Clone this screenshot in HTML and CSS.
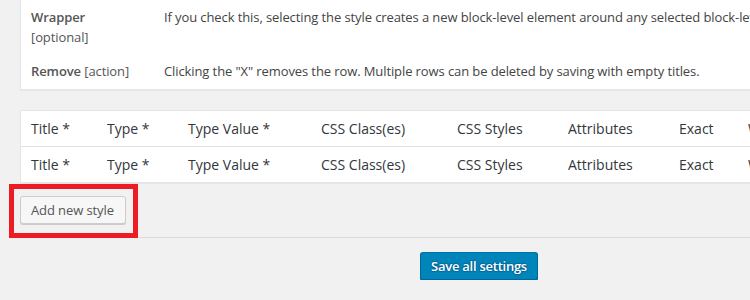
FILE: index.html
```html
<!DOCTYPE html>
<html>
  <head>
    <meta charset="UTF-8">
    <title>Style settings</title>
    <link rel="stylesheet" href="styles.css">
  </head>
  <body>
    <div class="wrap">
      <div class="card help">
        <table class="help-table">
          <tr>
            <td class="lbl"><b>Wrapper</b><br>[optional]</td>
            <td>If you check this, selecting the style creates a new block-level element around any selected block-level elements.</td>
          </tr>
          <tr>
            <td class="lbl"><b>Remove</b> [action]</td>
            <td>Clicking the "X" removes the row. Multiple rows can be deleted by saving with empty titles.</td>
          </tr>
        </table>
      </div>

      <div class="card styles">
        <table class="styles-table">
          <colgroup>
            <col class="c-title">
            <col class="c-type">
            <col class="c-value">
            <col class="c-class">
            <col class="c-css">
            <col class="c-attr">
            <col class="c-exact">
            <col class="c-wrap">
          </colgroup>
          <thead>
            <tr>
              <th>Title *</th>
              <th>Type *</th>
              <th>Type Value *</th>
              <th>CSS Class(es)</th>
              <th>CSS Styles</th>
              <th>Attributes</th>
              <th>Exact</th>
              <th>Wrapper</th>
            </tr>
          </thead>
          <tfoot>
            <tr>
              <td>Title *</td>
              <td>Type *</td>
              <td>Type Value *</td>
              <td>CSS Class(es)</td>
              <td>CSS Styles</td>
              <td>Attributes</td>
              <td>Exact</td>
              <td>Wrapper</td>
            </tr>
          </tfoot>
        </table>
      </div>

      <div class="mark">
        <button class="button">Add new style</button>
      </div>

      <div class="submit">
        <button class="button primary">Save all settings</button>
      </div>
    </div>
  </body>
</html>
```

FILE: styles.css
```css
html, body {
  margin: 0;
  padding: 0;
  overflow: hidden;
}
body {
  background: #f1f1f1;
  color: #444;
  font-family: "Open Sans", "Liberation Sans", sans-serif;
  font-size: 13px;
  line-height: 1.5;
  letter-spacing: -0.1px;
}
.wrap {
  padding: 0 0 0 20px;
  width: 900px;
}
.card {
  background: #fff;
  border: 1px solid #e5e5e5;
  box-shadow: 0 1px 1px rgba(0, 0, 0, .04);
}
.help {
  border-top: none;
}
.help-table {
  border-collapse: collapse;
  width: 100%;
}
.help-table td {
  padding: 8px 10px 7px;
  vertical-align: top;
}
.help-table .lbl {
  width: 113px;
  color: #555;
}
.help-table b {
  font-weight: 600;
  color: #555;
}
.styles {
  margin-top: 20px;
}
.styles-table {
  border-collapse: collapse;
  table-layout: fixed;
  width: 100%;
}
.styles-table th,
.styles-table td {
  padding: 8px 10px;
  text-align: left;
  font-size: 14px;
  line-height: 19.5px;
  font-weight: 400;
  color: #32373c;
  letter-spacing: 0;
  white-space: nowrap;
  overflow: hidden;
}
.styles-table thead th {
  border-bottom: 1px solid #e1e1e1;
}
.styles-table tfoot td {
  padding-bottom: 7px;
  border-top: 1px solid #e1e1e1;
}
.c-title { width: 76px; }
.c-type { width: 81px; }
.c-value { width: 133px; }
.c-class { width: 136px; }
.c-css { width: 111px; }
.c-attr { width: 111px; }
.c-exact { width: 69px; }
.mark {
  position: relative;
  display: inline-block;
  margin: 1px 0 -1px -11px;
  padding: 7px 7px 9px 6px;
  border: 5px solid #ed1c24;
  vertical-align: top;
}
.button {
  display: block;
  height: 28px;
  margin: 0;
  padding: 0 11px 1px 10px;
  font-family: inherit;
  font-size: 13px;
  line-height: 26px;
  letter-spacing: -0.1px;
  color: #555;
  background: #f7f7f7;
  border: 1px solid #ccc;
  border-radius: 3px;
  box-shadow: 0 1px 0 #ccc;
  white-space: nowrap;
  cursor: pointer;
}
.submit {
  border-top: 1px solid #ddd;
  padding: 14px 0 0 400px;
}
.primary {
  padding: 0 10px 1px;
  background: #0085ba;
  border-color: #0073aa #006799 #006799;
  box-shadow: 0 1px 0 #006799;
  color: #fff;
  font-weight: 600;
  letter-spacing: -0.25px;
  text-shadow: 0 -1px 1px #006799, 1px 0 1px #006799, 0 1px 1px #006799, -1px 0 1px #006799;
}
```
